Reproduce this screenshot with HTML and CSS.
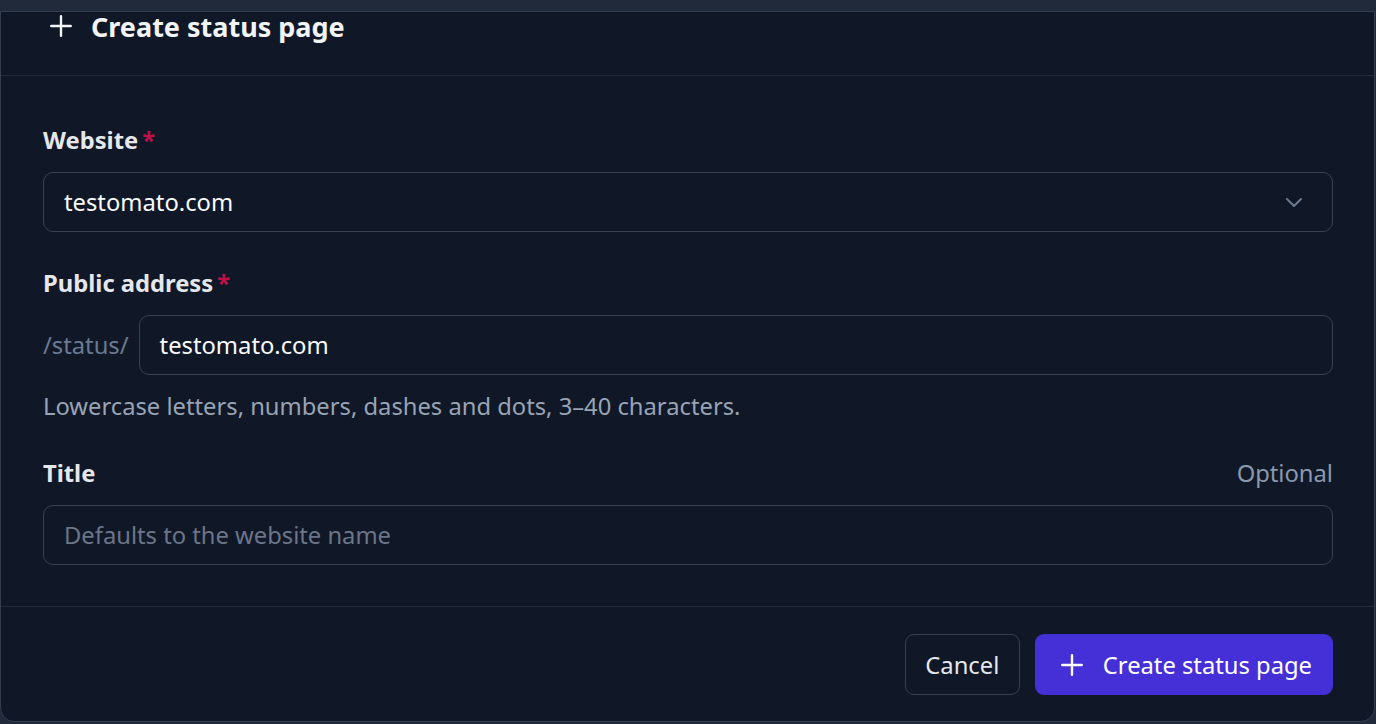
FILE: index.html
```html
<!DOCTYPE html>
<html lang="en">

<head>
    <meta charset="UTF-8">
    <meta name="viewport" content="width=device-width, initial-scale=1.0">
    <title>Create status page</title>
    <link rel="stylesheet" href="styles.css">
</head>

<body>
    <div class="backdrop-strip"></div>
    <div class="modal">
        <div class="modal-header">
            <svg class="icon-plus" viewBox="0 0 24 24" width="26" height="26">
                <path d="M12 3v18M3 12h18" stroke="currentColor" stroke-width="2.2" stroke-linecap="round" fill="none" />
            </svg>
            <h2>Create status page</h2>
        </div>

        <div class="modal-body">
            <div class="field">
                <label class="field-label">Website<span class="req">*</span></label>
                <div class="select-box">
                    <span>testomato.com</span>
                    <svg class="chevron" viewBox="0 0 24 24" width="24" height="24">
                        <path d="M5 9l7 7 7-7" stroke="currentColor" stroke-width="2" stroke-linecap="round" stroke-linejoin="round" fill="none" />
                    </svg>
                </div>
            </div>

            <div class="field">
                <label class="field-label">Public address<span class="req">*</span></label>
                <div class="input-row">
                    <span class="prefix">/status/</span>
                    <div class="text-input">testomato.com</div>
                </div>
                <p class="help">Lowercase letters, numbers, dashes and dots, 3–40 characters.</p>
            </div>

            <div class="field">
                <div class="label-row">
                    <label class="field-label">Title</label>
                    <span class="optional">Optional</span>
                </div>
                <div class="text-input placeholder">Defaults to the website name</div>
            </div>
        </div>

        <div class="modal-footer">
            <button class="btn btn-cancel">Cancel</button>
            <button class="btn btn-primary">
                <svg viewBox="0 0 24 24" width="26" height="26">
                    <path d="M12 3v18M3 12h18" stroke="currentColor" stroke-width="2.2" stroke-linecap="round" fill="none" />
                </svg>
                Create status page
            </button>
        </div>
    </div>
</body>

</html>
```

FILE: styles.css
```css
body,
html {
    margin: 0;
    padding: 0;
    height: 100%;
    overflow: hidden;
    background: #212a3a;
    font-family: "Noto Sans", "Open Sans", sans-serif;
}

.backdrop-strip {
    height: 11px;
    background: #212a3a;
}

/* Modal */
.modal {
    width: 1375px;
    background: #101828;
    border: 1px solid #333e50;
    border-radius: 0 0 14px 14px;
    box-sizing: border-box;
}

.modal-header {
    height: 63px;
    display: flex;
    align-items: flex-start;
    gap: 17px;
    padding: 0 0 0 47px;
    border-bottom: 1px solid #222b3b;
    color: #f3f4f6;
}

.modal-header .icon-plus {
    margin-top: 1px;
}

.modal-header h2 {
    margin: 0;
    font-size: 27px;
    line-height: 30px;
    font-weight: 700;
}

.modal-body {
    padding: 48px 41px 41px 42px;
    display: flex;
    flex-direction: column;
    gap: 35px;
    border-bottom: 1px solid #222b3b;
}

.field-label {
    display: block;
    font-size: 23.75px;
    line-height: 32px;
    font-weight: 700;
    color: #e5e7eb;
    margin-bottom: 16px;
}

.req {
    color: #c01048;
    margin-left: 4px;
}

.label-row {
    display: flex;
    justify-content: space-between;
}

.optional {
    font-size: 23.75px;
    line-height: 32px;
    color: #8b98ad;
}

.select-box,
.text-input {
    height: 60px;
    box-sizing: border-box;
    border: 1px solid #374151;
    border-radius: 10px;
    padding: 0 20px;
    display: flex;
    align-items: center;
    font-size: 23.75px;
    color: #f9fafb;
}

.select-box {
    justify-content: space-between;
    padding-right: 26px;
}

.chevron {
    color: #6b7a90;
}

.input-row {
    display: flex;
    align-items: center;
    gap: 10px;
}

.prefix {
    font-size: 23.75px;
    color: #6b7a90;
}

.input-row .text-input {
    flex: 1;
}

.text-input.placeholder {
    color: #6b7587;
}

.help {
    margin: 15px 0 0;
    font-size: 23.75px;
    line-height: 32px;
    color: #98a3b4;
}

/* Footer */
.modal-footer {
    display: flex;
    justify-content: flex-end;
    gap: 15px;
    padding: 27px 41px 26px 0;
}

.btn {
    height: 61px;
    box-sizing: border-box;
    border-radius: 9px;
    font-family: inherit;
    font-size: 23.75px;
    display: flex;
    align-items: center;
}

.btn-cancel {
    background: transparent;
    border: 1px solid #354053;
    color: #e5e7eb;
    padding: 0 19.5px;
}

.btn-primary {
    background: #4530d8;
    border: none;
    color: #fff;
    padding: 0 21px 0 24px;
    gap: 18px;
}
```
